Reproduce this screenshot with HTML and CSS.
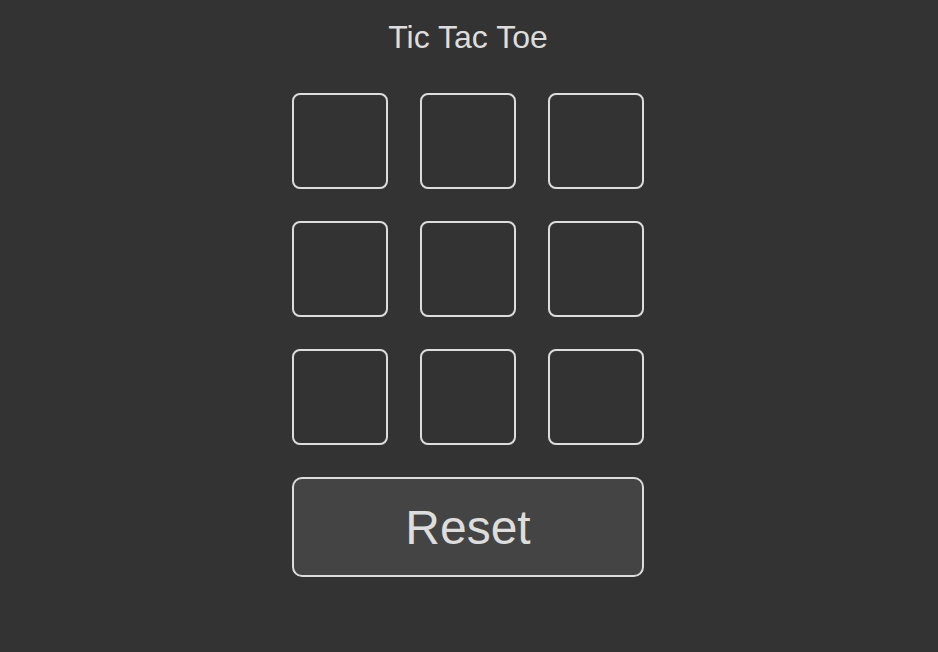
FILE: index.html
```html
<!DOCTYPE html>
<html>
<head>
<meta charset="utf-8">
<link rel="stylesheet" href="styles.css">
</head>
<body>
<div class="app">
  <h1 class="title">Tic Tac Toe</h1>
  <div class="board">
    <button class="cell"></button>
    <button class="cell"></button>
    <button class="cell"></button>
    <button class="cell"></button>
    <button class="cell"></button>
    <button class="cell"></button>
    <button class="cell"></button>
    <button class="cell"></button>
    <button class="cell"></button>
  </div>
  <button class="reset">Reset</button>
</div>
</body>
</html>
```
FILE: styles.css
```css
html, body {
  margin: 0;
  padding: 0;
  background: #333333;
  height: 100%;
}
body {
  font-family: "Liberation Sans", Arial, sans-serif;
  color: #dddddd;
}
.app {
  display: flex;
  flex-direction: column;
  align-items: center;
  padding-top: 20px;
  padding-right: 2px;
}
.title {
  margin: 0 0 39px 0;
  font-size: 32px;
  font-weight: normal;
  line-height: 34px;
}
.board {
  display: grid;
  grid-template-columns: repeat(3, 96px);
  grid-auto-rows: 96px;
  gap: 32px;
}
.cell {
  box-sizing: border-box;
  width: 96px;
  height: 96px;
  background: transparent;
  border: 2px solid #dddddd;
  border-radius: 8px;
  padding: 0;
  margin: 0;
}
.reset {
  box-sizing: border-box;
  margin-top: 32px;
  width: 352px;
  height: 100px;
  background: #444444;
  border: 2px solid #dddddd;
  border-radius: 10px;
  color: #dddddd;
  font-family: "Liberation Sans", Arial, sans-serif;
  font-size: 48px;
  padding: 0;
}
```
